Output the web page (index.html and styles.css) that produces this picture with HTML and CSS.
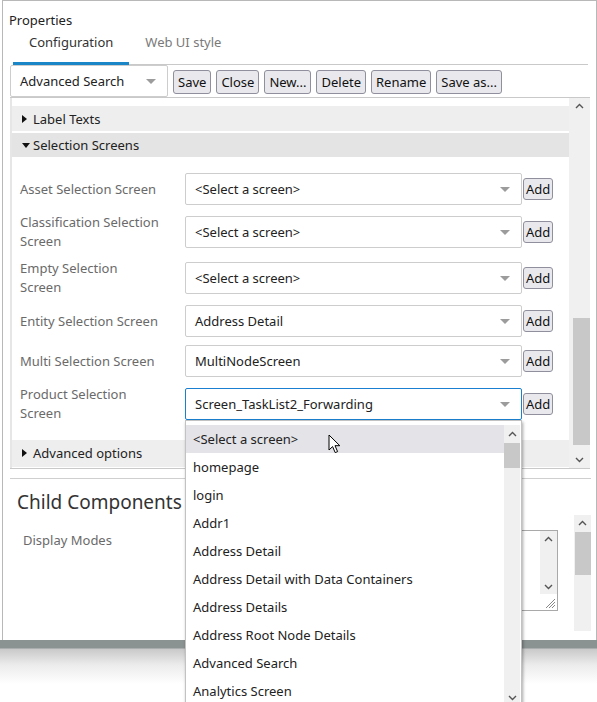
FILE: index.html
```html
<!DOCTYPE html>
<html>
<head>
<meta charset="utf-8">
<link rel="stylesheet" href="styles.css">
</head>
<body>
<div class="window">
  <div class="title">Properties</div>
  <div class="tabs">
    <div class="tab active">Configuration</div>
    <div class="tab">Web UI style</div>
  </div>
  <div class="toolbar">
    <div class="sel tsel">Advanced Search</div>
    <button class="btn">Save</button>
    <button class="btn">Close</button>
    <button class="btn">New...</button>
    <button class="btn">Delete</button>
    <button class="btn">Rename</button>
    <button class="btn">Save as...</button>
  </div>
  <div class="scrollbox">
    <div class="scroll-content">
      <div class="shead"><span class="tri-r"></span>Label Texts</div>
      <div class="shead open"><span class="tri-d"></span>Selection Screens</div>
      <div class="form">
        <div class="row"><div class="lbl">Asset Selection Screen</div><div class="sel fsel">&lt;Select a screen&gt;</div><button class="add">Add</button></div>
        <div class="row"><div class="lbl">Classification Selection Screen</div><div class="sel fsel">&lt;Select a screen&gt;</div><button class="add">Add</button></div>
        <div class="row"><div class="lbl">Empty Selection Screen</div><div class="sel fsel">&lt;Select a screen&gt;</div><button class="add">Add</button></div>
        <div class="row"><div class="lbl">Entity Selection Screen</div><div class="sel fsel">Address Detail</div><button class="add">Add</button></div>
        <div class="row"><div class="lbl">Multi Selection Screen</div><div class="sel fsel">MultiNodeScreen</div><button class="add">Add</button></div>
        <div class="row"><div class="lbl">Product Selection Screen</div><div class="sel fsel focus">Screen_TaskList2_Forwarding</div><button class="add">Add</button></div>
      </div>
      <div class="shead last"><span class="tri-r"></span>Advanced options</div>
    </div>
    <div class="vscroll main">
      <div class="chev"><svg width="9" height="6" viewBox="0 0 9 6"><path d="M1 5 L4.5 1.5 L8 5" fill="none" stroke="#555" stroke-width="1.4"/></svg></div>
      <div class="track"><div class="thumb main-thumb"></div></div>
      <div class="chev"><svg width="9" height="6" viewBox="0 0 9 6"><path d="M1 1 L4.5 4.5 L8 1" fill="none" stroke="#555" stroke-width="1.4"/></svg></div>
    </div>
  </div>
  <div class="lower">
    <div class="lower-content">
      <h2 class="h2">Child Components</h2>
      <div class="field">
        <div class="flbl">Display Modes</div>
        <div class="textarea">
          <div class="ta-scroll">
            <div class="chev small"><svg width="9" height="6" viewBox="0 0 9 6"><path d="M1 5 L4.5 1.5 L8 5" fill="none" stroke="#555" stroke-width="1.4"/></svg></div>
            <div class="ta-track"></div>
            <div class="chev small"><svg width="9" height="6" viewBox="0 0 9 6"><path d="M1 1 L4.5 4.5 L8 1" fill="none" stroke="#555" stroke-width="1.4"/></svg></div>
          </div>
          <svg class="grip" width="12" height="12" viewBox="0 0 12 12"><path d="M11 2 L2 11 M11 5 L5 11 M11 8 L8 11" stroke="#888" stroke-width="1"/></svg>
        </div>
      </div>
    </div>
    <div class="vscroll lower-scroll">
      <div class="chev"><svg width="9" height="6" viewBox="0 0 9 6"><path d="M1 5 L4.5 1.5 L8 5" fill="none" stroke="#555" stroke-width="1.4"/></svg></div>
      <div class="track"><div class="thumb lower-thumb"></div></div>
    </div>
  </div>
</div>
<div class="shadow"></div>

<div class="dropdown">
  <div class="items">
    <div class="item hl">&lt;Select a screen&gt;</div>
    <div class="item">homepage</div>
    <div class="item">login</div>
    <div class="item">Addr1</div>
    <div class="item">Address Detail</div>
    <div class="item">Address Detail with Data Containers</div>
    <div class="item">Address Details</div>
    <div class="item">Address Root Node Details</div>
    <div class="item">Advanced Search</div>
    <div class="item">Analytics Screen</div>
  </div>
  <div class="dscroll">
    <div class="chev dchev"><svg width="9" height="6" viewBox="0 0 9 6"><path d="M1 5 L4.5 1.5 L8 5" fill="none" stroke="#555" stroke-width="1.4"/></svg></div>
    <div class="dthumb"></div>
    <div class="dtrack"></div>
    <div class="chev dchev"><svg width="9" height="6" viewBox="0 0 9 6"><path d="M1 1 L4.5 4.5 L8 1" fill="none" stroke="#555" stroke-width="1.4"/></svg></div>
  </div>
</div>

<svg class="cursor" width="16" height="21" viewBox="0 0 16 21"><path d="M1 1 L1 16 L4.6 12.6 L7.2 18.6 L9.6 17.6 L7 11.7 L11.8 11.7 Z" fill="#fff" stroke="#000" stroke-width="1" stroke-linejoin="miter"/></svg>
</body>
</html>
```

FILE: styles.css
```css
* { box-sizing: border-box; }
html, body { margin: 0; padding: 0; }
body {
  width: 597px;
  height: 702px;
  overflow: hidden;
  position: relative;
  background: #fff;
  font-family: "Noto Sans", "Open Sans", sans-serif;
  font-size: 13px;
  color: #222;
}
.window {
  margin-left: 2px;
  width: 595px;
  height: 640px;
  border: 1px solid #b8b8b8;
  border-bottom: none;
  display: flex;
  flex-direction: column;
  background: #fff;
}
.shadow {
  height: 44px;
  background: linear-gradient(#8a9292 0, #8a9292 8px, #c9c9c9 9px, #ececec 25px, #fff 44px);
}
.title {
  padding: 10px 0 0 6px;
  line-height: 18px;
  color: #222;
}
.tabs {
  margin-left: 10px;
  width: 575px;
  display: flex;
  border-bottom: 1px solid #c9c9c9;
}
.tab {
  padding: 3px 16px 10px 16px;
  line-height: 20px;
  font-size: 13px;
  color: #7a7a7a;
  border-bottom: 3px solid transparent;
  margin-bottom: -1px;
}
.tab.active {
  color: #333;
  border-bottom-color: #1a86c8;
}
.toolbar {
  margin-left: 7px;
  height: 32px;
  display: flex;
  align-items: center;
}
.sel {
  position: relative;
  border: 1px solid #cdcdcd;
  border-radius: 2px;
  background: #fff;
  padding-left: 9px;
  display: flex;
  align-items: center;
  color: #222;
}
.sel::after {
  content: "";
  position: absolute;
  right: 11px;
  top: 50%;
  margin-top: -2px;
  border-left: 5px solid transparent;
  border-right: 5px solid transparent;
  border-top: 5px solid #9c9c9c;
}
.tsel {
  width: 158px;
  height: 32px;
}
.btn, .add {
  font-family: inherit;
  font-size: 13px;
  color: #111;
  background: #e9e9ed;
  border: 1px solid #8f8f9d;
  border-radius: 3px;
  padding: 0 4px;
  margin: 2px 0 0 5px;
  height: 24px;
  line-height: 20px;
}
.scrollbox {
  margin-left: 7px;
  width: 580px;
  height: 372px;
  border-top: 1px solid #c9c9c9;
  border-bottom: 1px solid #c9c9c9;
  display: flex;
}
.scroll-content {
  flex: 1;
  border-left: 2px solid #e6e6e6;
  padding-top: 8px;
}
.shead {
  height: 25px;
  background: #eeeeee;
  display: flex;
  align-items: center;
  padding-left: 10px;
  color: #222;
}
.shead.open {
  margin-top: 2px;
  height: 24px;
  background: #e4e4e4;
}
.shead.last {
  height: 27px;
  padding-bottom: 1px;
}
.tri-r {
  width: 0; height: 0;
  border-top: 4px solid transparent;
  border-bottom: 4px solid transparent;
  border-left: 5px solid #111;
  margin-right: 6px;
}
.tri-d {
  width: 0; height: 0;
  border-left: 4.5px solid transparent;
  border-right: 4.5px solid transparent;
  border-top: 5px solid #111;
  margin-right: 3px;
}
.form {
  padding: 16px 0 17px 8px;
  display: flex;
  flex-direction: column;
  gap: 8px;
}
.row {
  display: flex;
  align-items: center;
  min-height: 32px;
}
.lbl {
  width: 139px;
  margin-right: 26px;
  line-height: 19px;
  color: #6a6a6a;
}
.fsel {
  width: 337px;
  height: 32px;
}
.fsel.focus {
  border-color: #1a7fcf;
}
.add {
  margin: 0 0 0 1px;
  height: 22px;
  padding: 0 2px;
  line-height: 18px;
}
.vscroll {
  background: #f0f0f0;
  display: flex;
  flex-direction: column;
}
.vscroll.main {
  width: 21px;
}
.chev {
  height: 16px;
  display: flex;
  align-items: center;
  justify-content: center;
  flex: none;
}
.track {
  flex: 1;
  position: relative;
}
.thumb {
  position: absolute;
  left: 4px;
  right: 0;
  background: #c8c8c8;
}
.main-thumb {
  top: 204px;
  height: 127px;
}
.lower {
  margin: 9px 0 0 7px;
  width: 581px;
  border-top: 1px solid #cfcfcf;
  display: flex;
}
.lower-content {
  flex: 1;
}
.h2 {
  margin: 0;
  padding: 10px 0 0 7px;
  font-size: 19px;
  font-weight: normal;
  line-height: 26px;
  color: #333;
}
.field {
  display: flex;
  margin-top: 15px;
}
.flbl {
  width: 162px;
  margin-left: 13px;
  padding-top: 1px;
  line-height: 18px;
  color: #6a6a6a;
}
.textarea {
  position: relative;
  width: 373px;
  height: 81px;
  border: 1px solid #a9a9a9;
  display: flex;
  justify-content: flex-end;
}
.ta-scroll {
  width: 17px;
  height: 63px;
  display: flex;
  flex-direction: column;
  background: #f0f0f0;
}
.ta-track { flex: 1; }
.chev.small { height: 15px; }
.grip {
  position: absolute;
  right: 1px;
  bottom: 1px;
}
.lower-scroll {
  width: 17px;
  height: 116px;
  margin-top: 36px;
}
.lower-thumb {
  left: 1px;
  top: 1px;
  height: 43px;
}
.dropdown {
  position: absolute;
  left: 185px;
  top: 420px;
  width: 337px;
  height: 300px;
  border: 1px solid #c2c2c2;
  background: #fff;
  box-shadow: 1px 2px 3px rgba(0,0,0,0.35);
  padding-top: 4px;
  display: flex;
}
.items {
  flex: 1;
}
.item {
  height: 28px;
  line-height: 28px;
  padding-left: 7px;
  color: #222;
  white-space: nowrap;
}
.item.hl {
  background: #e3e3e8;
}
.dscroll {
  width: 16px;
  background: #f0f0f0;
  display: flex;
  flex-direction: column;
  margin-right: 1px;
}
.dchev { height: 18px; }
.dthumb {
  height: 25px;
  background: #c8c8c8;
}
.dtrack { height: 221px; }
.cursor {
  position: absolute;
  left: 328px;
  top: 434px;
}
```
